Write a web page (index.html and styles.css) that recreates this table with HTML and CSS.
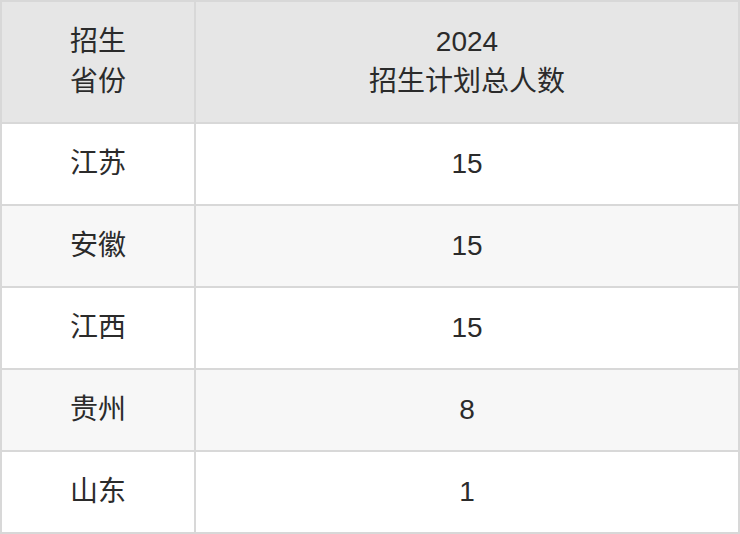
FILE: index.html
```html
<!DOCTYPE html>
<html lang="zh-CN">
<head>
<meta charset="utf-8">
<title>招生计划</title>
<link rel="stylesheet" href="styles.css">
</head>
<body>
<div class="table">
  <div class="cell head">招生<br>省份</div>
  <div class="cell head">2024<br>招生计划总人数</div>
  <div class="cell">江苏</div>
  <div class="cell">15</div>
  <div class="cell alt">安徽</div>
  <div class="cell alt">15</div>
  <div class="cell">江西</div>
  <div class="cell">15</div>
  <div class="cell alt">贵州</div>
  <div class="cell alt">8</div>
  <div class="cell">山东</div>
  <div class="cell">1</div>
</div>
</body>
</html>
```
FILE: styles.css
```css
html, body {
  margin: 0;
  padding: 0;
  background: #ffffff;
}
.table {
  width: 740px;
  height: 534px;
  box-sizing: border-box;
  display: grid;
  grid-template-columns: 192px 1fr;
  grid-template-rows: 120px repeat(5, 80px);
  gap: 2px;
  padding: 2px;
  background: #d8d8d8;
  font-family: "Liberation Sans", "Noto Sans CJK SC", sans-serif;
  font-size: 28px;
  color: #2b2b2b;
}
.cell {
  display: flex;
  align-items: center;
  justify-content: center;
  text-align: center;
  background: #ffffff;
  line-height: 40px;
}
.cell.head {
  background: #e6e6e6;
}
.cell.alt {
  background: #f7f7f7;
}
```
